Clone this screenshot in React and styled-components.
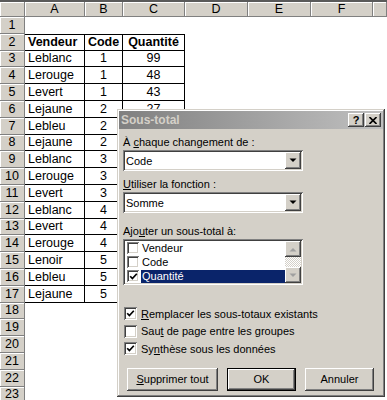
import React from 'react';
import styled, { createGlobalStyle, css } from 'styled-components';

const GlobalStyle = createGlobalStyle`
  html, body {
    margin: 0;
    padding: 0;
    background: #fff;
    overflow: hidden;
  }
  body {
    font-family: "Liberation Sans", Arial, sans-serif;
  }
`;

const raised = css`
  background: #d4d0c8;
  box-shadow: inset -1px -1px 0 #404040, inset 1px 1px 0 #fff,
    inset -2px -2px 0 #808080, inset 2px 2px 0 #d4d0c8;
`;

const sunken = css`
  background: #fff;
  box-shadow: inset 1px 1px 0 #808080, inset -1px -1px 0 #fff,
    inset 2px 2px 0 #404040, inset -2px -2px 0 #d4d0c8;
`;

const Screen = styled.div`
  position: relative;
  width: 387px;
  height: 400px;
  overflow: hidden;
`;

/* ---------- spreadsheet ---------- */

const Sheet = styled.div`
  display: grid;
  grid-template-columns: 25px 60px 38px 62px 63px 63px 62px 1fr;
  grid-template-rows: 15px;
  grid-auto-rows: 16.8px;
  border-top: 2px solid #5a5a5a;
  font-size: 12.5px;
  color: #000;
`;

const HeadCell = styled.div`
  display: flex;
  align-items: center;
  justify-content: center;
  background: #d4d0c8;
  border-right: 1px solid #808080;
  border-bottom: 1px solid #808080;
  box-shadow: inset 1px 1px 0 #fff;
  box-sizing: border-box;
  color: #000;
`;

const Cell = styled.div`
  display: flex;
  align-items: center;
  justify-content: ${(p) => (p.$center ? 'center' : 'flex-start')};
  padding: 0 3px;
  box-sizing: border-box;
  white-space: nowrap;
  font-weight: ${(p) => (p.$bold ? 'bold' : 'normal')};
  ${(p) =>
    p.$boxed &&
    css`
      border-right: 1px solid #000;
      border-bottom: 1px solid #000;
    `}
  ${(p) => p.$top && 'border-top: 1px solid #000;'}
`;

/* ---------- dialog ---------- */

const Dialog = styled.div`
  position: absolute;
  left: 117px;
  top: 109px;
  width: 268px;
  height: 288px;
  box-sizing: border-box;
  padding: 2px;
  background: #d4d0c8;
  box-shadow: inset -1px -1px 0 #404040, inset 1px 1px 0 #d4d0c8,
    inset -2px -2px 0 #808080, inset 2px 2px 0 #fff;
  font-size: 11px;
  color: #000;
`;

const TitleBar = styled.div`
  display: flex;
  align-items: center;
  justify-content: space-between;
  height: 18px;
  padding: 0 2px 0 2px;
  background: linear-gradient(to right, #808080, #c0c0c0);
  color: #d4d0c8;
  font-weight: bold;
  font-size: 12px;
`;

const TitleButtons = styled.div`
  display: flex;
  gap: 1px;
`;

const TitleButton = styled.div`
  ${raised};
  width: 16px;
  height: 14px;
  display: flex;
  align-items: center;
  justify-content: center;
  color: #000;
  font-size: 11px;
  font-weight: bold;
`;

const Body = styled.div`
  display: flex;
  flex-direction: column;
  padding-left: 4px;
`;

const Label = styled.div`
  line-height: 13px;
  height: 13px;
  margin-top: ${(p) => p.$mt}px;
  white-space: nowrap;
`;

const Key = styled.span`
  text-decoration: underline;
`;

const Select = styled.div`
  ${sunken};
  width: 180px;
  height: 21px;
  margin-top: 1px;
  box-sizing: border-box;
  padding: 2px;
  display: flex;
  align-items: center;
`;

const SelectValue = styled.span`
  flex: 1;
  padding-left: 1px;
`;

const DropButton = styled.div`
  ${raised};
  width: 16px;
  height: 17px;
  display: flex;
  align-items: center;
  justify-content: center;
`;

const ListBox = styled.div`
  ${sunken};
  width: 180px;
  height: 46px;
  margin-top: 1px;
  box-sizing: border-box;
  padding: 2px;
  display: flex;
`;

const Items = styled.div`
  flex: 1;
  display: flex;
  flex-direction: column;
  padding-left: 2px;
`;

const Item = styled.div`
  height: 14px;
  display: flex;
  align-items: center;
  gap: 2px;
`;

const ItemText = styled.span`
  flex: 1;
  height: 13px;
  line-height: 13px;
  padding-left: 1px;
  background: ${(p) => (p.$selected ? '#0a246a' : 'transparent')};
  color: ${(p) => (p.$selected ? '#fff' : '#000')};
`;

const Scrollbar = styled.div`
  width: 16px;
  display: flex;
  flex-direction: column;
`;

const ScrollButton = styled.div`
  ${raised};
  width: 16px;
  height: 16px;
  display: flex;
  align-items: center;
  justify-content: center;
`;

const ScrollTrack = styled.div`
  flex: 1;
  background: repeating-conic-gradient(#fff 0 25%, #d4d0c8 0 50%) 0 0 / 2px 2px;
`;

const Box = styled.div`
  ${sunken};
  width: ${(p) => p.$size}px;
  height: ${(p) => p.$size}px;
  flex: none;
  display: flex;
  align-items: center;
  justify-content: center;
`;

const Options = styled.div`
  display: flex;
  flex-direction: column;
  margin-top: 20px;
`;

const OptionRow = styled.div`
  display: flex;
  align-items: center;
  gap: 4px;
  height: 17.5px;
  padding-left: 1px;
  white-space: nowrap;
`;

const Buttons = styled.div`
  display: flex;
  gap: 9px;
  margin-top: 10px;
  padding-left: 4px;
`;

const Button = styled.div`
  ${raised};
  width: ${(p) => p.$w}px;
  height: 23px;
  display: flex;
  align-items: center;
  justify-content: center;
  box-sizing: border-box;
  ${(p) =>
    p.$default &&
    css`
      border: 1px solid #000;
    `}
`;

const Check = () => (
  <svg width="9" height="9" viewBox="0 0 9 9">
    <path d="M1.2 4.2 L3.4 6.6 L7.8 1.8" fill="none" stroke="#000" strokeWidth="1.7" />
  </svg>
);

const Arrow = ({ up, color = '#000' }) => (
  <svg width="8" height="5" viewBox="0 0 8 5">
    {up ? (
      <path d="M0.5 4.5 L4 1 L7.5 4.5 Z" fill={color} />
    ) : (
      <path d="M0.5 0.5 L7.5 0.5 L4 4 Z" fill={color} />
    )}
  </svg>
);

const rows = [
  ['Leblanc', 1, 99],
  ['Lerouge', 1, 48],
  ['Levert', 1, 43],
  ['Lejaune', 2, 27],
  ['Lebleu', 2, 65],
  ['Lejaune', 2, 31],
  ['Leblanc', 3, 72],
  ['Lerouge', 3, 54],
  ['Levert', 3, 88],
  ['Leblanc', 4, 19],
  ['Levert', 4, 36],
  ['Lerouge', 4, 61],
  ['Lenoir', 5, 45],
  ['Lebleu', 5, 23],
  ['Lejaune', 5, 80],
];

const cols = ['A', 'B', 'C', 'D', 'E', 'F', ''];

function SheetGrid() {
  const cells = [<HeadCell key="corner" />];
  cols.forEach((c) => cells.push(<HeadCell key={'h' + c}>{c}</HeadCell>));

  for (let r = 1; r <= 23; r++) {
    cells.push(<HeadCell key={'r' + r}>{r}</HeadCell>);
    let data = null;
    if (r === 2) data = [['Vendeur'], ['Code', true], ['Quantité', true]];
    else if (r >= 3 && r <= 17) {
      const d = rows[r - 3];
      data = [[d[0]], [d[1], true], [d[2], true]];
    }
    for (let c = 0; c < 7; c++) {
      if (data && c < 3) {
        cells.push(
          <Cell key={r + '-' + c} $boxed $top={r === 2} $bold={r === 2} $center={data[c][1]}>
            {data[c][0]}
          </Cell>
        );
      } else {
        cells.push(<Cell key={r + '-' + c} />);
      }
    }
  }
  return <Sheet>{cells}</Sheet>;
}

function SubtotalDialog() {
  return (
    <Dialog>
      <TitleBar>
        <span>Sous-total</span>
        <TitleButtons>
          <TitleButton>?</TitleButton>
          <TitleButton>
            <svg width="8" height="7" viewBox="0 0 8 7">
              <path d="M0.5 0 L7.5 7 M7.5 0 L0.5 7" stroke="#000" strokeWidth="1.6" />
            </svg>
          </TitleButton>
        </TitleButtons>
      </TitleBar>
      <Body>
        <Label $mt={7}>
          À <Key>c</Key>haque changement de :
        </Label>
        <Select>
          <SelectValue>Code</SelectValue>
          <DropButton>
            <Arrow />
          </DropButton>
        </Select>

        <Label $mt={7}>
          <Key>U</Key>tiliser la fonction :
        </Label>
        <Select>
          <SelectValue>Somme</SelectValue>
          <DropButton>
            <Arrow />
          </DropButton>
        </Select>

        <Label $mt={12}>
          Ajo<Key>u</Key>ter un sous-total à:
        </Label>
        <ListBox>
          <Items>
            <Item>
              <Box $size={12} />
              <ItemText>Vendeur</ItemText>
            </Item>
            <Item>
              <Box $size={12} />
              <ItemText>Code</ItemText>
            </Item>
            <Item>
              <Box $size={12}>
                <Check />
              </Box>
              <ItemText $selected>Quantité</ItemText>
            </Item>
          </Items>
          <Scrollbar>
            <ScrollButton>
              <Arrow up color="#a0a0a0" />
            </ScrollButton>
            <ScrollTrack />
            <ScrollButton>
              <Arrow color="#a0a0a0" />
            </ScrollButton>
          </Scrollbar>
        </ListBox>

        <Options>
          <OptionRow>
            <Box $size={13}>
              <Check />
            </Box>
            <span>
              <Key>R</Key>emplacer les sous-totaux existants
            </span>
          </OptionRow>
          <OptionRow>
            <Box $size={13} />
            <span>
              Sau<Key>t</Key> de page entre les groupes
            </span>
          </OptionRow>
          <OptionRow>
            <Box $size={13}>
              <Check />
            </Box>
            <span>
              Sy<Key>n</Key>thèse sous les données
            </span>
          </OptionRow>
        </Options>

        <Buttons>
          <Button $w={91}>
            <span>
              <Key>S</Key>upprimer tout
            </span>
          </Button>
          <Button $w={69} $default>
            OK
          </Button>
          <Button $w={69}>Annuler</Button>
        </Buttons>
      </Body>
    </Dialog>
  );
}

export default function App() {
  return (
    <Screen>
      <GlobalStyle />
      <SheetGrid />
      <SubtotalDialog />
    </Screen>
  );
}
